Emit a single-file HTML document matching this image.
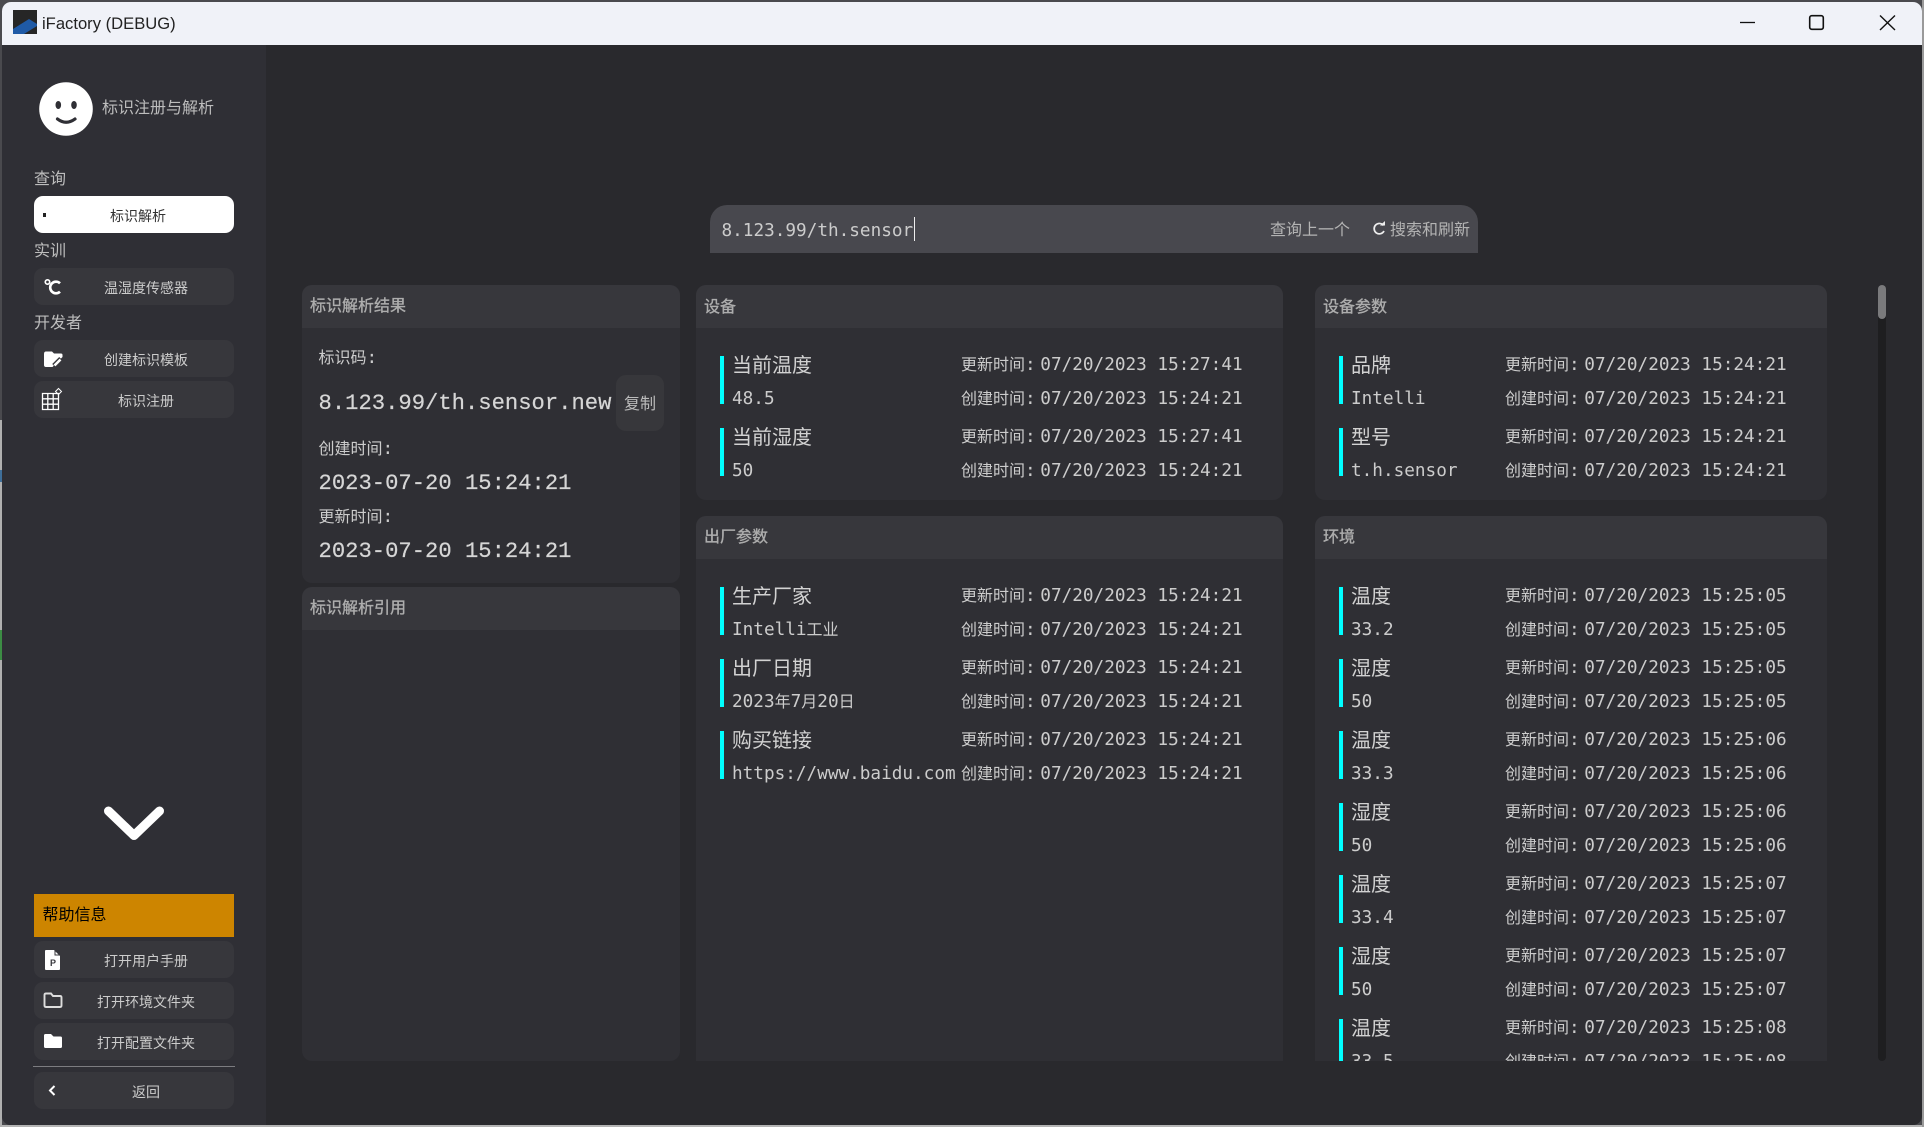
<!DOCTYPE html>
<html lang="zh"><head><meta charset="utf-8"><title>iFactory (DEBUG)</title>
<style>
html,body{margin:0;padding:0;width:1924px;height:1127px;overflow:hidden;background:#4a4a4e}
*{box-sizing:border-box}
body{position:relative;font-family:"Liberation Sans","Noto Sans CJK SC",sans-serif;color:#ccc}
.a{position:absolute;white-space:nowrap}
#bot{position:absolute;left:0;top:1125px;width:1924px;height:2px;background:#b4b4b4}
#lft{position:absolute;left:0;top:420px;width:2px;height:707px;background:#b0b0b0}
#rgt{position:absolute;left:1922px;top:0;width:2px;height:1127px;background:#9a9a9a}
#win{position:absolute;left:2px;top:2px;width:1920px;height:1123px;background:#29292d;border-radius:9px;overflow:hidden}
#tb{position:absolute;left:0;top:0;width:1920px;height:43px;background:#f0f2f8}
#side{position:absolute;left:0;top:43px;width:264px;height:1080px;background:#2f2f35}
.h{position:absolute;font-size:16px;line-height:24px;color:#bdbdbd;white-space:nowrap}
.b{position:absolute;left:34px;width:200px;height:37px;background:#37373c;border-radius:9px}
.bt{position:absolute;font-size:14px;line-height:20px;color:#ccc;white-space:nowrap}
.ic{position:absolute;left:0;top:0;overflow:visible}
#clip{position:absolute;left:0;top:0;width:1924px;height:1061px;overflow:hidden}
.p{position:absolute;background:#2f2f34;border-radius:10px 10px 0 0;overflow:hidden}
.p>i{display:block;height:43px;background:#37373c}
.pt{position:absolute;font-size:16px;line-height:24px;color:#adadad;-webkit-text-stroke:.35px #adadad;white-space:nowrap}
.m{font-family:"DejaVu Sans Mono","Liberation Mono",monospace;font-size:17.7px;color:#ccc}
.c{font-family:"Liberation Sans","Noto Sans CJK SC",sans-serif;font-size:16px}
.r{position:absolute;width:480px;height:48px}
.r>b{position:absolute;left:0;top:0;width:4px;height:48px;background:#0ff}
.r>span{position:absolute;white-space:nowrap;line-height:24px}
.l{left:12px;top:-5px;font-size:20px;line-height:30px!important;color:#d2d2d2;font-weight:400}
.v{left:12px;top:31px}
.k1{left:241px;top:-3px}.k2{left:241px;top:31px}
.t1{left:320.3px;top:-3px}.t2{left:320.3px;top:31px}
.q .k1,.q .k2{left:166px}
.q .t1,.q .t2{left:245.3px}
.big{font-family:"Liberation Mono","DejaVu Sans Mono",monospace;font-size:22.2px;line-height:30px;color:#d6d6d6;position:absolute;white-space:nowrap;-webkit-text-stroke:.2px #d6d6d6}
</style></head><body>
<div id="bot"></div><div id="lft"></div><div id="rgt"></div>
<div class="a" style="left:0;top:470px;width:2px;height:12px;background:#3f6f9a"></div>
<div class="a" style="left:0;top:630px;width:2px;height:30px;background:#3c8c44"></div>
<div id="win">
  <div id="tb"></div>
  <div id="side"></div>
</div>

<!-- title bar -->
<svg class="ic" width="1924" height="50">
  <rect x="13" y="10" width="24" height="24" fill="#262626"/>
  <path d="M13 29 L29 19 L37 24 L37 26 L24 34 L13 34Z" fill="#1f5aa6"/>
  <path d="M1740 22.5H1755" stroke="#111" stroke-width="1.3"/>
  <rect x="1809.7" y="15.7" width="13.6" height="13.6" rx="2" fill="none" stroke="#111" stroke-width="1.6"/>
  <path d="M1880 15.5L1895 30M1895 15.5L1880 30" stroke="#111" stroke-width="1.4" fill="none"/>
</svg>
<div class="a" style="left:42px;top:11.500px;font-size:16.6px;line-height:24px;color:#222">iFactory (DEBUG)</div>

<!-- sidebar -->
<svg class="ic" width="270" height="150">
  <circle cx="66" cy="109" r="26.8" fill="#fff"/>
  <ellipse cx="58.3" cy="105" rx="2.8" ry="4" fill="#2f2f35"/>
  <ellipse cx="74" cy="105" rx="2.8" ry="4" fill="#2f2f35"/>
  <path d="M57.5 119 Q66 125.500 75 119" fill="none" stroke="#2f2f35" stroke-width="3.2" stroke-linecap="round"/>
</svg>
<div class="h" style="left:102px;top:97px">标识注册与解析</div>

<div class="h" style="left:34px;top:167.500px">查询</div>
<div class="b" style="top:196px;background:#fff"></div>
<div class="bt" style="left:110px;top:206px;color:#333">标识解析</div>
<div class="a" style="left:43px;top:213px;width:3px;height:4px;background:#222"></div>

<div class="h" style="left:34px;top:239.500px">实训</div>
<div class="b" style="top:268px"></div>
<div class="bt" style="left:104px;top:278px">温湿度传感器</div>

<div class="h" style="left:34px;top:311.500px">开发者</div>
<div class="b" style="top:340px"></div>
<div class="bt" style="left:104px;top:350px">创建标识模板</div>
<div class="b" style="top:381px"></div>
<div class="bt" style="left:118px;top:391px">标识注册</div>

<div class="a" style="left:34px;top:894px;width:200px;height:43px;background:#cd8500"></div>
<div class="a" style="left:42.500px;top:904px;font-size:16px;line-height:24px;color:#000">帮助信息</div>
<div class="b" style="top:941px"></div>
<div class="bt" style="left:104px;top:951px">打开用户手册</div>
<div class="b" style="top:982px"></div>
<div class="bt" style="left:97px;top:992px">打开环境文件夹</div>
<div class="b" style="top:1023px"></div>
<div class="bt" style="left:97px;top:1033px">打开配置文件夹</div>
<div class="a" style="left:33px;top:1066px;width:202px;height:1px;background:#7c7c80"></div>
<div class="b" style="top:1072px"></div>
<div class="bt" style="left:132px;top:1082px">返回</div>

<svg class="ic" width="270" height="1127">
  <circle cx="47.500" cy="282" r="2.200" fill="none" stroke="#fff" stroke-width="1.700"/>
  <path d="M60 283.300 A5.800 5.800 0 1 0 60 291.700" fill="none" stroke="#fff" stroke-width="2.600"/>
  <path d="M44 354q0-2.500 2-2.500h6l2 2h7q1.500 0 1.500 1.500v2L52.500 367H46q-2 0-2-2z" fill="#fff"/>
  <path d="M54 365.800l7-7" fill="none" stroke="#37373c" stroke-width="5"/>
  <path d="M54.500 365.500l6-6" fill="none" stroke="#fff" stroke-width="2.600"/>
  <path d="M42.500 393.500H58.500V409.500H42.500ZM42.500 398.800H58.500M42.500 404.200H58.500M47.800 393.500V409.500M53.200 393.500V409.500" fill="none" stroke="#fff" stroke-width="1.300"/>
  <path d="M55.500 391.500l3-3 3 3-3 3z" fill="none" stroke="#fff" stroke-width="1"/>
  <path d="M108.500 811L134 835.500L159.500 811" fill="none" stroke="#fff" stroke-width="9" stroke-linecap="round" stroke-linejoin="round"/>
  <path d="M46 950h8l6 6v13q0 1-1 1H46q-1 0-1-1v-18q0-1 1-1z" fill="#fff"/>
  <path d="M55 950v5h5" fill="none" stroke="#37373c" stroke-width="1"/>
  <text x="50" y="966" font-size="9" font-weight="bold" font-family="Liberation Sans,sans-serif" fill="#37373c">P</text>
  <path d="M44.500 995q0-1.500 1.500-1.500h5l2 2.500h7q1.500 0 1.500 1.500v8q0 1.500-1.500 1.500H46q-1.500 0-1.500-1.500z" fill="none" stroke="#ddd" stroke-width="1.900"/>
  <path d="M44 1035.500q0-1.500 1.500-1.500h5.500l2.500 2.500h7q1.500 0 1.500 1.500v8.500q0 1.500-1.500 1.500h-15q-1.500 0-1.500-1.500z" fill="#fff"/>
  <path d="M54.500 1086L50 1090.500L54.500 1095" fill="none" stroke="#fff" stroke-width="2"/>
</svg>

<!-- search -->
<div class="a" style="left:710px;top:205px;width:768px;height:48px;background:#48484e;border-radius:17px 17px 0 0"></div>
<div class="a m" style="left:721.500px;top:218.500px;line-height:24px">8.123.99/th.sensor</div>
<div class="a" style="left:914px;top:217px;width:1px;height:24px;background:#eee"></div>
<div class="a" style="left:1270px;top:219px;font-size:16px;line-height:24px;color:#b4b4b4">查询上一个</div>
<svg class="ic" width="1924" height="300"><path d="M1383.500 225.500A5.200 5.200 0 1 0 1384 231" fill="none" stroke="#eee" stroke-width="1.700"/><path d="M1380 225.500h5v-4.500z" fill="#eee"/></svg>
<div class="a" style="left:1390px;top:219px;font-size:16px;line-height:24px;color:#b4b4b4">搜索和刷新</div>

<!-- scrollbar -->
<div class="a" style="left:1878px;top:285px;width:8px;height:776px;background:#1e1e20;border-radius:4px"></div>
<div class="a" style="left:1878px;top:285px;width:8px;height:34px;background:#7a7a7c;border-radius:4px"></div>

<div id="clip">
  <!-- left panels -->
  <div class="p" style="left:302px;top:285px;width:378px;height:298px;border-radius:10px"><i></i></div>
  <div class="p" style="left:302px;top:587px;width:378px;height:474px;border-radius:10px"><i></i></div>
  <div class="pt" style="left:310px;top:295px">标识解析结果</div>
  <div class="pt" style="left:310px;top:597px">标识解析引用</div>
  <div class="a m" style="left:318.500px;top:346px;line-height:24px"><span class="c">标识码</span>:</div>
  <div class="big" style="left:318.500px;top:389px">8.123.99/th.sensor.new</div>
  <div class="a" style="left:616px;top:375px;width:48px;height:56px;background:#37373b;border-radius:10px"></div>
  <div class="a" style="left:624px;top:393px;font-size:16px;line-height:24px;color:#bbb">复制</div>
  <div class="a m" style="left:318.500px;top:437px;line-height:24px"><span class="c">创建时间</span>:</div>
  <div class="big" style="left:318.500px;top:469px">2023-07-20 15:24:21</div>
  <div class="a m" style="left:318.500px;top:505px;line-height:24px"><span class="c">更新时间</span>:</div>
  <div class="big" style="left:318.500px;top:537px">2023-07-20 15:24:21</div>

  <!-- middle panels -->
  <div class="p" style="left:696px;top:285px;width:587px;height:215px;border-radius:10px"><i></i></div>
  <div class="pt" style="left:704px;top:296px">设备</div>
  <div class="p" style="left:696px;top:516px;width:587px;height:560px"><i></i></div>
  <div class="pt" style="left:704px;top:526px">出厂参数</div>

  <!-- right panels -->
  <div class="p" style="left:1315px;top:285px;width:512px;height:215px;border-radius:10px"><i></i></div>
  <div class="pt" style="left:1323px;top:296px">设备参数</div>
  <div class="p" style="left:1315px;top:516px;width:512px;height:560px"><i></i></div>
  <div class="pt" style="left:1323px;top:526px">环境</div>

  <!-- rows middle -->
  <div class="r" style="left:720px;top:356px"><b></b><span class="l">当前温度</span><span class="v m">48.5</span><span class="k1 m"><span class="c">更新时间</span>:</span><span class="t1 m">07/20/2023 15:27:41</span><span class="k2 m"><span class="c">创建时间</span>:</span><span class="t2 m">07/20/2023 15:24:21</span></div>
  <div class="r" style="left:720px;top:428px"><b></b><span class="l">当前湿度</span><span class="v m">50</span><span class="k1 m"><span class="c">更新时间</span>:</span><span class="t1 m">07/20/2023 15:27:41</span><span class="k2 m"><span class="c">创建时间</span>:</span><span class="t2 m">07/20/2023 15:24:21</span></div>
  <div class="r" style="left:720px;top:587px"><b></b><span class="l">生产厂家</span><span class="v m">Intelli<span class="c">工业</span></span><span class="k1 m"><span class="c">更新时间</span>:</span><span class="t1 m">07/20/2023 15:24:21</span><span class="k2 m"><span class="c">创建时间</span>:</span><span class="t2 m">07/20/2023 15:24:21</span></div>
  <div class="r" style="left:720px;top:659px"><b></b><span class="l">出厂日期</span><span class="v m">2023<span class="c">年</span>7<span class="c">月</span>20<span class="c">日</span></span><span class="k1 m"><span class="c">更新时间</span>:</span><span class="t1 m">07/20/2023 15:24:21</span><span class="k2 m"><span class="c">创建时间</span>:</span><span class="t2 m">07/20/2023 15:24:21</span></div>
  <div class="r" style="left:720px;top:731px"><b></b><span class="l">购买链接</span><span class="v m">https://www.baidu.com</span><span class="k1 m"><span class="c">更新时间</span>:</span><span class="t1 m">07/20/2023 15:24:21</span><span class="k2 m"><span class="c">创建时间</span>:</span><span class="t2 m">07/20/2023 15:24:21</span></div>

  <!-- rows right -->
  <div class="r q" style="left:1339px;top:356px"><b></b><span class="l">品牌</span><span class="v m">Intelli</span><span class="k1 m"><span class="c">更新时间</span>:</span><span class="t1 m">07/20/2023 15:24:21</span><span class="k2 m"><span class="c">创建时间</span>:</span><span class="t2 m">07/20/2023 15:24:21</span></div>
  <div class="r q" style="left:1339px;top:428px"><b></b><span class="l">型号</span><span class="v m">t.h.sensor</span><span class="k1 m"><span class="c">更新时间</span>:</span><span class="t1 m">07/20/2023 15:24:21</span><span class="k2 m"><span class="c">创建时间</span>:</span><span class="t2 m">07/20/2023 15:24:21</span></div>
  <div class="r q" style="left:1339px;top:587px"><b></b><span class="l">温度</span><span class="v m">33.2</span><span class="k1 m"><span class="c">更新时间</span>:</span><span class="t1 m">07/20/2023 15:25:05</span><span class="k2 m"><span class="c">创建时间</span>:</span><span class="t2 m">07/20/2023 15:25:05</span></div>
  <div class="r q" style="left:1339px;top:659px"><b></b><span class="l">湿度</span><span class="v m">50</span><span class="k1 m"><span class="c">更新时间</span>:</span><span class="t1 m">07/20/2023 15:25:05</span><span class="k2 m"><span class="c">创建时间</span>:</span><span class="t2 m">07/20/2023 15:25:05</span></div>
  <div class="r q" style="left:1339px;top:731px"><b></b><span class="l">温度</span><span class="v m">33.3</span><span class="k1 m"><span class="c">更新时间</span>:</span><span class="t1 m">07/20/2023 15:25:06</span><span class="k2 m"><span class="c">创建时间</span>:</span><span class="t2 m">07/20/2023 15:25:06</span></div>
  <div class="r q" style="left:1339px;top:803px"><b></b><span class="l">湿度</span><span class="v m">50</span><span class="k1 m"><span class="c">更新时间</span>:</span><span class="t1 m">07/20/2023 15:25:06</span><span class="k2 m"><span class="c">创建时间</span>:</span><span class="t2 m">07/20/2023 15:25:06</span></div>
  <div class="r q" style="left:1339px;top:875px"><b></b><span class="l">温度</span><span class="v m">33.4</span><span class="k1 m"><span class="c">更新时间</span>:</span><span class="t1 m">07/20/2023 15:25:07</span><span class="k2 m"><span class="c">创建时间</span>:</span><span class="t2 m">07/20/2023 15:25:07</span></div>
  <div class="r q" style="left:1339px;top:947px"><b></b><span class="l">湿度</span><span class="v m">50</span><span class="k1 m"><span class="c">更新时间</span>:</span><span class="t1 m">07/20/2023 15:25:07</span><span class="k2 m"><span class="c">创建时间</span>:</span><span class="t2 m">07/20/2023 15:25:07</span></div>
  <div class="r q" style="left:1339px;top:1019px"><b></b><span class="l">温度</span><span class="v m">33.5</span><span class="k1 m"><span class="c">更新时间</span>:</span><span class="t1 m">07/20/2023 15:25:08</span><span class="k2 m"><span class="c">创建时间</span>:</span><span class="t2 m">07/20/2023 15:25:08</span></div>
</div>
</body></html>
